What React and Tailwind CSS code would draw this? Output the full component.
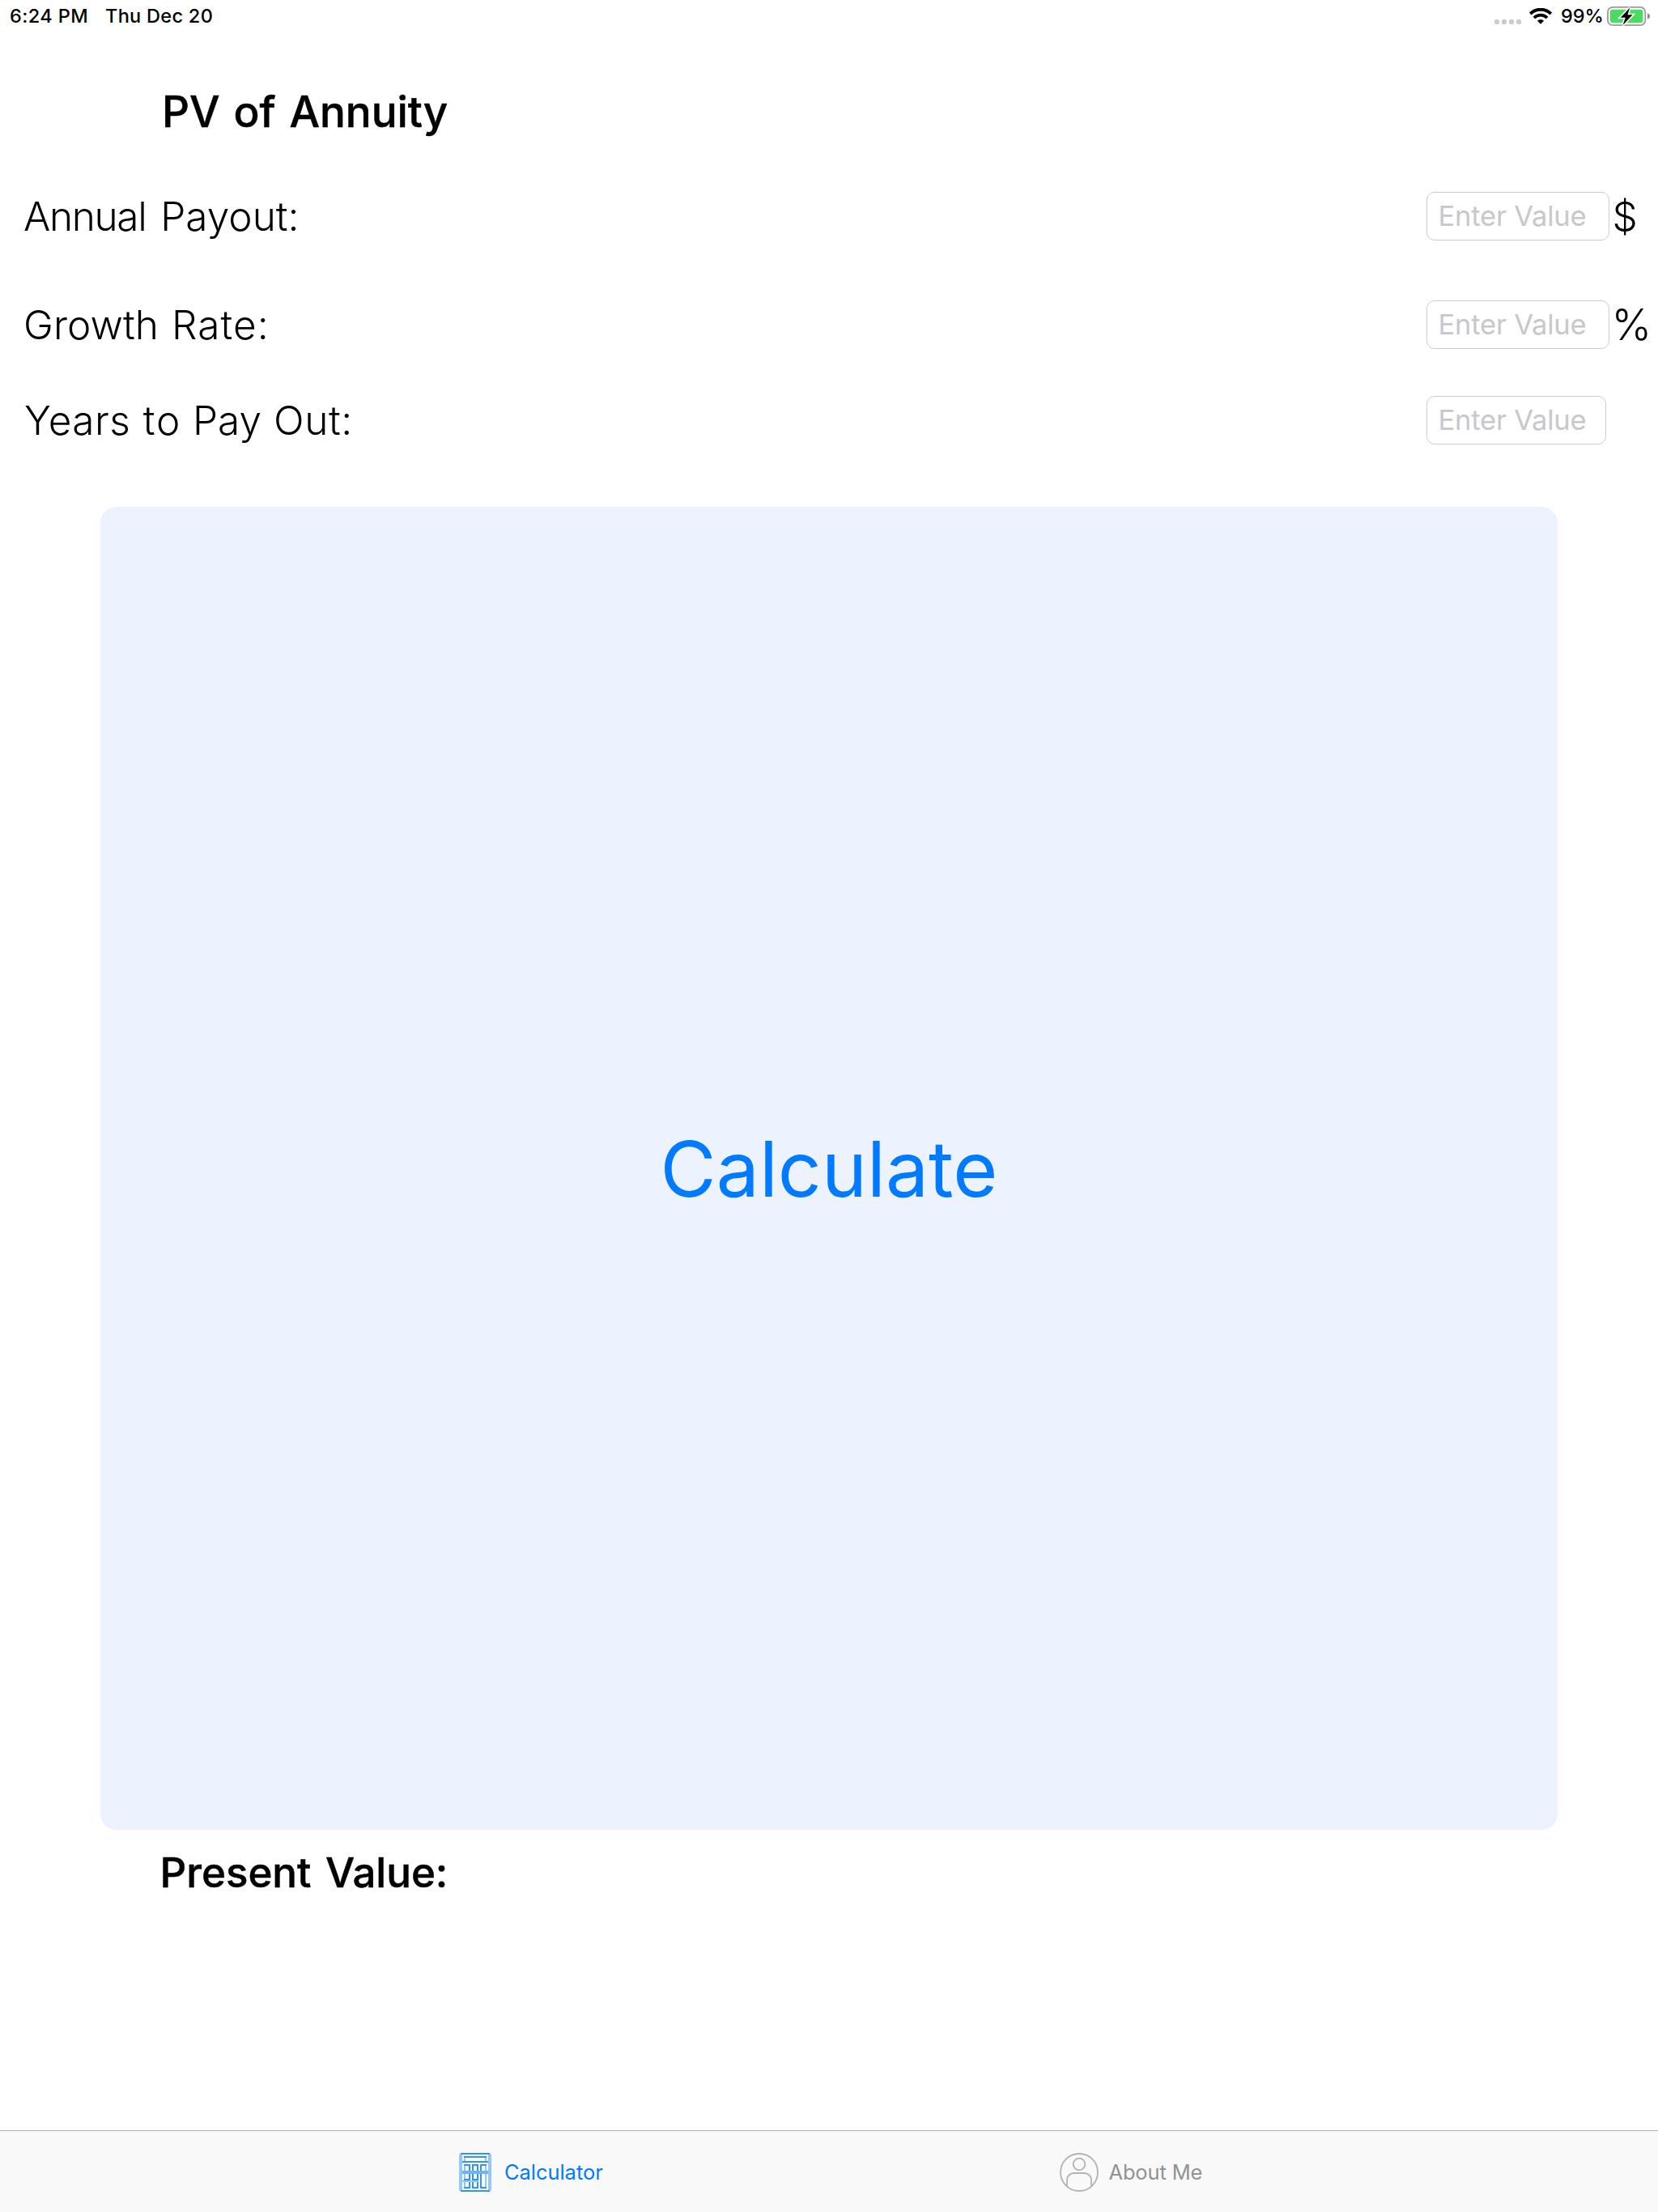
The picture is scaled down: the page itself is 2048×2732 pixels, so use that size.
const ROWS = [
  {
    words: [
      { text: "Annual", cls: "tracking-[-1.35px]" },
      { text: "Payout:", cls: "ml-[17.9px]" },
    ],
    start: "pl-[29px]",
    gap: "mt-[68px]",
    field: "w-[226px]",
    unit: "$",
    unitCls: "pl-[3.5px]",
  },
  {
    words: [
      { text: "Growth", cls: "tracking-[0.1px]" },
      { text: "Rate:", cls: "ml-[15.9px] tracking-[1.1px]" },
    ],
    start: "pl-[29px]",
    gap: "mt-[74px]",
    field: "w-[226px]",
    unit: "%",
    unitCls: "pl-[2.5px] text-[53px]",
  },
  {
    words: [
      { text: "Years", cls: "tracking-[0.5px]" },
      { text: "to", cls: "ml-[15.3px] tracking-[2px]" },
      { text: "Pay", cls: "ml-[13.6px]" },
      { text: "Out:", cls: "ml-[15px] tracking-[0.6px]" },
    ],
    start: "pl-[30px]",
    gap: "mt-[58px]",
    field: "w-[222px]",
    unit: "",
    unitCls: "",
  },
];

function WifiIcon() {
  return (
    <svg className="h-[20px] w-[28px]" viewBox="0 0 28 20" fill="none" stroke="#000">
      <path d="M1.3 7a18 18 0 0 1 25.4 0" strokeWidth="4" />
      <path d="M5.9 12a11.5 11.5 0 0 1 16.2 0" strokeWidth="3.8" />
      <path d="M14 19.8l-4.1-4.1a5.9 5.9 0 0 1 8.2 0z" fill="#000" stroke="none" />
    </svg>
  );
}

function BatteryIcon() {
  return (
    <svg className="h-[26px] w-[54px]" viewBox="0 0 54 26">
      <rect x="0.9" y="1.9" width="46.4" height="22.2" rx="6.2" fill="#fff" stroke="#9b9b9b" strokeWidth="1.8" />
      <rect x="3.8" y="4.8" width="40.6" height="16.4" rx="3.4" fill="#4cd964" />
      <path d="M50 9.2c2 .7 3 2 3 3.8s-1 3.1-3 3.8z" fill="#8e8e8e" />
      <path
        d="M28.3 2.6L16.7 14.7h6.1l-3.2 9.3L31.6 11.3h-6.2z"
        fill="#000"
        stroke="#fff"
        strokeWidth="3.2"
        paintOrder="stroke"
      />
    </svg>
  );
}

function CalculatorIcon() {
  return (
    <svg className="h-[48px] w-[40px]" viewBox="0 0 20 24" shapeRendering="crispEdges">
      <rect width="20" height="24" fill="#d3e8fe" />
      <path d="M0 1h2v22H0zM18 1h2v22h-2z" fill="#94c7ff" />
      <rect x="2" y="1" width="16" height="22" fill="#fbfdff" />
      <g fill="#94c7ff">
        <path d="M3 3h1v2H3zM16 3h1v2h-1z" />
        <path d="M3 8h1v13H3zM16 8h1v13h-1z" />
        <path d="M2 17h10v1H2z" />
      </g>
      <rect x="2" y="11" width="16" height="2" fill="#6bb2ff" />
      <g fill="#2f93ff">
        <path d="M1 0h18v1H1zM1 23h18v1H1z" />
        <path d="M3 2h14v1H3zM2 5h16v1H2z" />
        <path d="M3 7h4v1H3zM8 7h4v1H8zM13 7h4v1h-4z" />
        <path d="M6 8h1v3H6zM8 8h1v3H8zM11 8h1v3h-1zM13 8h1v3h-1z" />
        <path d="M6 13h1v3H6zM8 13h1v3H8zM11 13h1v3h-1zM13 13h1v8h-1z" />
        <path d="M3 16h4v1H3zM8 16h4v1H8z" />
        <path d="M6 18h1v3H6zM8 18h1v3H8zM11 18h1v3h-1z" />
        <path d="M3 21h4v1H3zM8 21h4v1H8zM13 21h4v1h-4z" />
      </g>
    </svg>
  );
}

function PersonIcon() {
  return (
    <svg className="h-[48px] w-[48px]" viewBox="0 0 48 48" fill="none" stroke="#b2b2b2" strokeWidth="1.8">
      <circle cx="24" cy="24" r="23" />
      <circle cx="24" cy="14" r="7.3" />
      <path d="M9 41.5V33.5a8.5 8.5 0 0 1 8.5-8.5h13a8.5 8.5 0 0 1 8.5 8.5v8" />
    </svg>
  );
}

function StatusBar() {
  return (
    <header className="flex h-[39px] shrink-0 items-center pl-[12px] pr-[9px] text-[23.5px] font-medium leading-[39px]">
      <span className="w-[118px] tracking-[0.4px]">6:24 PM</span>
      <span className="tracking-[0.3px]">Thu Dec 20</span>
      <div className="ml-auto flex items-center">
        <div className="mt-[15px] flex gap-[3px]">
          {[0, 1, 2, 3].map((i) => (
            <i key={i} className="size-[6px] rounded-[2px] bg-[#cbcbcb]" />
          ))}
        </div>
        <div className="ml-[10px]">
          <WifiIcon />
        </div>
        <span className="ml-[11px] w-[57px]">99%</span>
        <BatteryIcon />
      </div>
    </header>
  );
}

export default function App() {
  return (
    <div className="flex h-[2732px] w-[2048px] flex-col overflow-hidden bg-white font-['Inter','Liberation_Sans',sans-serif] text-black">
      <StatusBar />
      <h1 className="mt-[67px] h-[63px] shrink-0 pl-[200px] text-[53px] font-medium leading-[64px] tracking-[-0.07px] [-webkit-text-stroke:0.5px_#000] [word-spacing:3px]">
        PV of Annuity
      </h1>

      {ROWS.map((row) => (
        <div key={row.unit} className={`flex h-[60px] shrink-0 items-center ${row.gap} ${row.start}`}>
          <label className="flex text-[49.5px] font-light leading-[60px]">
            {row.words.map((word) => (
              <span key={word.text} className={word.cls}>
                {word.text}
              </span>
            ))}
          </label>
          <div className="ml-auto flex w-[286px] text-[49.5px] font-light leading-[60px]">
            <div
              className={`h-[60px] shrink-0 rounded-[10px] border border-[#cccccc] pl-[13.5px] text-[34.5px] font-normal leading-[58px] tracking-[-0.2px] text-[#c7c7cc] ${row.field}`}
            >
              Enter Value
            </div>
            <span className={row.unitCls}>{row.unit}</span>
          </div>
        </div>
      ))}

      <button className="mx-[124px] mt-[77px] h-[1634px] shrink-0 rounded-[20px] bg-[#ecf3ff] pt-[2px] text-[94.5px] leading-[120px] tracking-[0.1px] text-[#007aff]">
        Calculate
      </button>

      <h2 className="mt-[23px] h-[60px] shrink-0 pl-[197.5px] text-[51px] font-medium leading-[60px] [-webkit-text-stroke:0.5px_#000] [word-spacing:4px]">
        Present Value:
      </h2>

      <nav className="mt-auto flex h-[101px] shrink-0 items-center border-t border-[#b2b2b2] bg-[#f9f9f9] pl-[567px] pt-[2px] text-[25.4px] leading-[48px]">
        <a className="flex w-[742px] items-center gap-[16px] text-[#007aff]">
          <CalculatorIcon />
          Calculator
        </a>
        <a className="flex items-center gap-[12.5px] tracking-[-0.1px] text-[#929292]">
          <PersonIcon />
          About Me
        </a>
      </nav>
    </div>
  );
}
